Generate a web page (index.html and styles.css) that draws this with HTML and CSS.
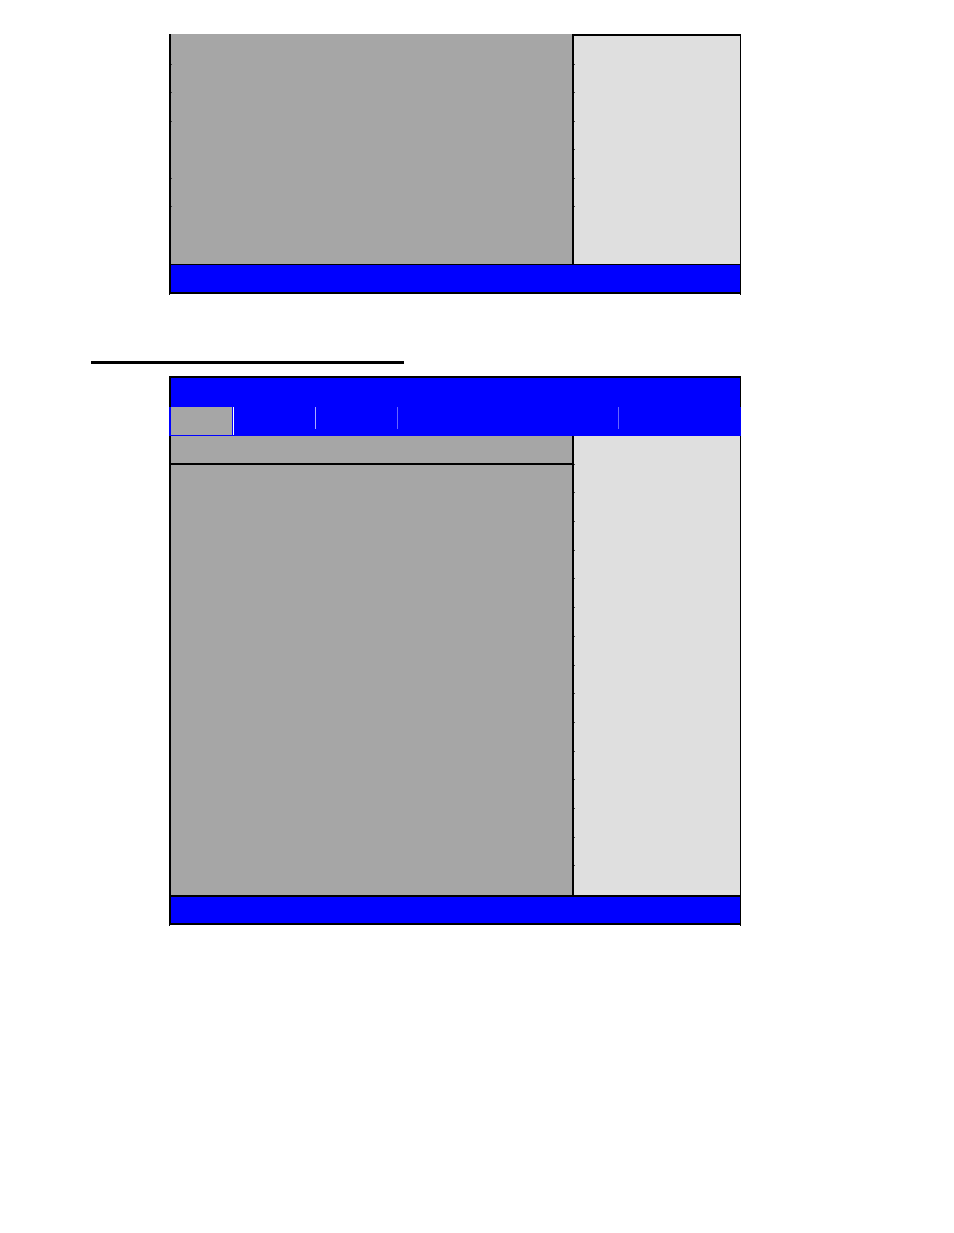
FILE: index.html
```
<!DOCTYPE html>
<html lang="en">
<head>
  <meta charset="UTF-8">
  <meta name="viewport" content="width=device-width, initial-scale=1.0">
  <title>BIOS Setup Screens</title>
  <link rel="stylesheet" href="styles.css">
</head>
<body>
  <main class="page">
    <!-- Lower part of the previous screen -->
    <section class="screen">
      <div class="content short">
        <div class="settings ticked">
          <div class="row"></div>
          <div class="row"></div>
          <div class="row"></div>
          <div class="row plain"></div>
          <div class="row"></div>
          <div class="row"></div>
          <div class="row plain"></div>
          <div class="row plain"></div>
        </div>
        <div class="help topped">
          <div class="row"></div>
          <div class="row"></div>
          <div class="row"></div>
          <div class="row"></div>
          <div class="row"></div>
          <div class="row"></div>
          <div class="row plain"></div>
          <div class="row plain"></div>
        </div>
      </div>
      <div class="bottom-bar thin"></div>
    </section>

    <hr class="heading-rule">

    <!-- Full screen with menu tabs -->
    <section class="screen">
      <div class="title-bar"></div>
      <div class="tabs">
        <div class="tab active"></div>
        <div class="tab first"></div>
        <div class="tab"></div>
        <div class="tab wide"></div>
        <div class="tab last"></div>
      </div>
      <div class="content tall">
        <div class="settings">
          <div class="section-title"></div>
        </div>
        <div class="help">
          <div class="row"></div>
          <div class="row"></div>
          <div class="row"></div>
          <div class="row"></div>
          <div class="row"></div>
          <div class="row"></div>
          <div class="row"></div>
          <div class="row"></div>
          <div class="row"></div>
          <div class="row"></div>
          <div class="row"></div>
          <div class="row"></div>
          <div class="row"></div>
          <div class="row"></div>
          <div class="row"></div>
          <div class="row plain"></div>
        </div>
      </div>
      <div class="bottom-bar"></div>
    </section>
  </main>
</body>
</html>
```
FILE: styles.css
```
* {
  box-sizing: border-box;
}

body {
  margin: 0;
  background: #fff;
  font-family: "Liberation Sans", Arial, sans-serif;
}

.page {
  padding: 34px 213px 34px 91px;
}

.screen {
  margin-left: 78px;
}

.title-bar {
  height: 31px;
  background: #0000ff;
  border: solid #000;
  border-width: 2px 1px 0 2px;
}

/* Menu tabs */
.tabs {
  display: flex;
  align-items: flex-start;
  height: 29px;
  padding-left: 2px;
  background: #0000ff;
}

.tab {
  flex: 82 1 0;
  height: 22px;
  border-right: 1px solid #6666ff;
}

.tab.active {
  flex: 0 0 61px;
  height: 28px;
  background: #a6a6a6;
  border: none;
}

.tab.first {
  height: 28px;
  margin-left: 1px;
  border-left: 1px solid #fff;
  border-right: none;
  background: linear-gradient(#aaaaff, #aaaaff) right top / 1px 22px no-repeat;
}

.tab.wide {
  flex-grow: 221;
}

.tab.last {
  flex-grow: 122;
  border: none;
}

/* Settings on the left, help on the right */
.content {
  display: grid;
  grid-template-columns: minmax(0, 1fr) 169px;
}

.short {
  min-height: 230px;
}

.tall {
  min-height: 459px;
}

.settings,
.help {
  display: flex;
  flex-direction: column;
  border-left: 2px solid #000;
}

.settings {
  background: #a6a6a6;
}

.help {
  background: #dfdfdf;
  border-right: 1px solid #000;
}

.topped {
  border-top: 2px solid #000;
}

.ticked {
  padding-top: 2px;
}

.section-title {
  height: 29px;
  border-bottom: 2px solid #000;
}

.row {
  flex: 1;
  background: linear-gradient(#444, #444) left bottom / 1px 1px no-repeat;
}

.row.plain {
  background: none;
}

.bottom-bar {
  position: relative;
  height: 30px;
  background: #0000ff;
  border: solid #000;
  border-width: 2px 1px 2px 2px;
}

.bottom-bar.thin {
  border-top-width: 1px;
}

/* side borders run on just below the bar */
.bottom-bar::after {
  content: "";
  position: absolute;
  top: 100%;
  left: -2px;
  right: -1px;
  height: 3px;
  border: solid #000;
  border-width: 0 1px;
}

.heading-rule {
  width: 313px;
  height: 3px;
  margin: 67px 0 12px;
  border: none;
  background: #000;
}
```
